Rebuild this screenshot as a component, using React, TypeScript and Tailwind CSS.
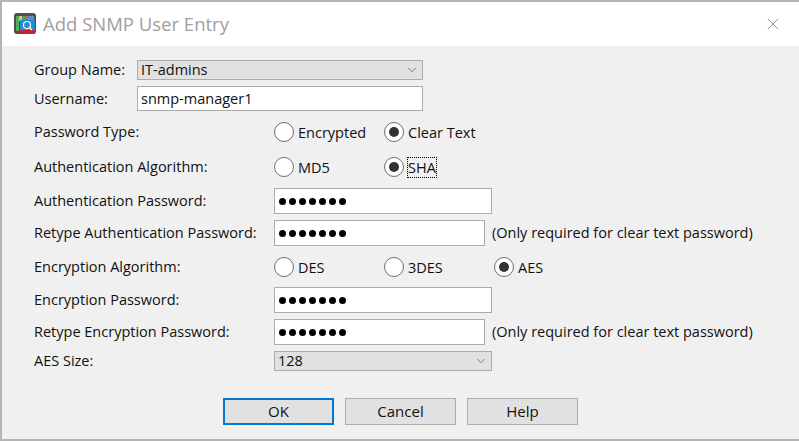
import { ChevronDown, X } from 'lucide-react';

const font = "font-['Open_Sans','Noto_Sans',sans-serif]";

function Radio({ label, checked, width, focus }: { label: string; checked?: boolean; width: string; focus?: boolean }) {
  return (
    <div className={`flex items-center ${width}`}>
      <span className="w-[20px] h-[20px] rounded-full border border-[#6e6e6e] bg-white flex items-center justify-center shrink-0">
        {checked && <span className="w-[10px] h-[10px] rounded-full bg-[#333333]" />}
      </span>
      <span className={`ml-[4px] leading-[19px] ${focus ? 'outline-1 outline-dotted outline-black' : ''}`}>{label}</span>
    </div>
  );
}

function Dots() {
  return (
    <span className="flex gap-[3px] ml-[4px]">
      {[0, 1, 2, 3, 4, 5, 6].map((i) => (
        <span key={i} className="w-[7px] h-[7px] rounded-full bg-black" />
      ))}
    </span>
  );
}

function Field({ width, children }: { width: string; children?: React.ReactNode }) {
  return (
    <div className={`h-[26px] bg-white border border-[#ababab] flex items-center ${width}`}>
      {children}
    </div>
  );
}

function Select({ width, value, height }: { width: string; value: string; height: string }) {
  return (
    <div className={`bg-[#e1e1e1] border border-[#ababab] flex items-center justify-between pl-[3px] pr-[3px] ${width} ${height}`}>
      <span>{value}</span>
      <ChevronDown className="w-[14px] h-[14px] text-[#555555]" strokeWidth={1.25} />
    </div>
  );
}

function Btn({ label, primary }: { label: string; primary?: boolean }) {
  return (
    <button
      className={`w-[111px] h-[27px] bg-[#e1e1e1] border text-[15px] ${
        primary ? 'border-2 border-[#0078d7]' : 'border-[#adadad]'
      }`}
    >
      {label}
    </button>
  );
}

const note = '(Only required for clear text password)';

export default function App() {
  return (
    <div className={`w-[799px] h-[443px] bg-white overflow-hidden text-[14.5px] text-[#111111] ${font}`}>
      <div className="h-[441px] border-t-2 border-l-2 border-b-2 border-[#b4b4b4] flex flex-col">
        <div className="h-[44px] bg-white flex items-center pl-[11px] pr-[16px] shrink-0">
          <svg width="24" height="24" viewBox="0 0 24 24">
            <rect x="1" y="1" width="22" height="21" rx="3" fill="#4b4f52" />
            <rect x="3" y="4" width="3" height="15" fill="#5aa85a" />
            <rect x="6" y="4" width="3" height="5" fill="#d9c94f" />
            <rect x="9" y="4" width="3" height="5" fill="#4aa05a" />
            <rect x="12" y="4" width="3" height="5" fill="#d75b4b" />
            <rect x="15" y="4" width="6" height="5" fill="#5b8fd0" />
            <rect x="7" y="8" width="15" height="10" fill="#1c8fd6" />
            <rect x="7" y="18" width="15" height="4" fill="#c0282d" />
            <circle cx="14" cy="13" r="3.5" fill="none" stroke="#ffffff" strokeWidth="1.2" />
            <path d="M16.5 15.5 L19 18" stroke="#ffffff" strokeWidth="1.2" />
          </svg>
          <span className="ml-[6px] text-[18.5px] text-[#a0a0a0] leading-none">Add SNMP User Entry</span>
          <X className="ml-auto w-[20px] h-[20px] text-[#777777]" strokeWidth={1} />
        </div>
        <div className="flex-1 bg-[#f0f0f0] pl-[32px] pt-[14px]">
          <div className="flex items-center h-[20px]">
            <span className="w-[103px]">Group Name:</span>
            <Select width="w-[286px]" height="h-[20px]" value="IT-admins" />
          </div>
          <div className="flex items-center h-[25px] mt-[6px]">
            <span className="w-[103px]">Username:</span>
            <div className="w-[286px] h-[25px] bg-white border border-[#ababab] flex items-center pl-[3px]">snmp-manager1</div>
          </div>
          <div className="flex items-center h-[20px] mt-[11px]">
            <span className="w-[240px]">Password Type:</span>
            <Radio label="Encrypted" width="w-[110px]" />
            <Radio label="Clear Text" checked width="w-[110px]" />
          </div>
          <div className="flex items-center h-[20px] mt-[15px]">
            <span className="w-[240px]">Authentication Algorithm:</span>
            <Radio label="MD5" width="w-[110px]" />
            <Radio label="SHA" checked focus width="w-[110px]" />
          </div>
          <div className="flex items-center h-[26px] mt-[11px]">
            <span className="w-[240px]">Authentication Password:</span>
            <Field width="w-[218px]"><Dots /></Field>
          </div>
          <div className="flex items-center h-[26px] mt-[6px]">
            <span className="w-[240px]">Retype Authentication Password:</span>
            <Field width="w-[211px]"><Dots /></Field>
            <span className="ml-[7px]">{note}</span>
          </div>
          <div className="flex items-center h-[20px] mt-[11px]">
            <span className="w-[240px]">Encryption Algorithm:</span>
            <Radio label="DES" width="w-[110px]" />
            <Radio label="3DES" width="w-[110px]" />
            <Radio label="AES" checked width="w-[110px]" />
          </div>
          <div className="flex items-center h-[26px] mt-[10px]">
            <span className="w-[240px]">Encryption Password:</span>
            <Field width="w-[218px]"><Dots /></Field>
          </div>
          <div className="flex items-center h-[26px] mt-[6px]">
            <span className="w-[240px]">Retype Encryption Password:</span>
            <Field width="w-[211px]"><Dots /></Field>
            <span className="ml-[7px]">{note}</span>
          </div>
          <div className="flex items-center h-[20px] mt-[6px]">
            <span className="w-[240px]">AES Size:</span>
            <Select width="w-[218px]" height="h-[20px]" value="128" />
          </div>
          <div className="flex gap-[11px] ml-[189px] mt-[27px]">
            <Btn label="OK" primary />
            <Btn label="Cancel" />
            <Btn label="Help" />
          </div>
        </div>
      </div>
    </div>
  );
}
